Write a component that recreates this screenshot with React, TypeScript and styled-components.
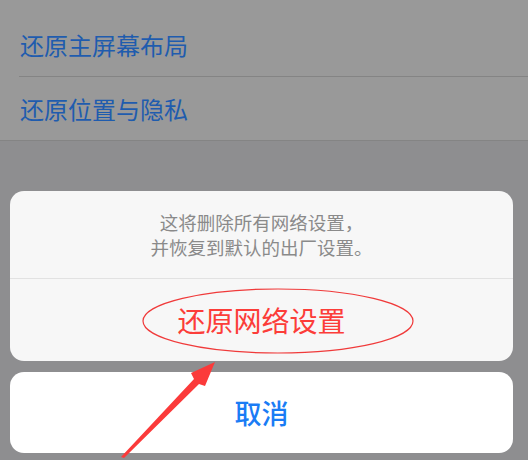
import React from "react";
import styled, { createGlobalStyle } from "styled-components";

const Global = createGlobalStyle`
  html, body { margin: 0; padding: 0; }
  body {
    width: 528px;
    height: 460px;
    overflow: hidden;
    background: #8e8e90;
    font-family: "Noto Sans CJK SC", "Noto Sans", sans-serif;
  }
`;

const Screen = styled.div`
  position: relative;
  width: 528px;
  height: 460px;
  background: #8e8e90;
  display: flex;
  flex-direction: column;
`;

const List = styled.div`
  background: #999999;
  border-bottom: 1px solid #848484;
  display: flex;
  flex-direction: column;
`;

const Row = styled.div<{ $h: number }>`
  position: relative;
  height: ${(p) => p.$h}px;
  padding-left: 20px;
  display: flex;
  align-items: center;
  font-size: 24px;
  color: #1f5cae;
  & + &::before {
    content: "";
    position: absolute;
    top: 0;
    left: 19px;
    right: 0;
    height: 1px;
    background: #848484;
  }
`;

const Sheet = styled.div`
  margin-top: 50px;
  padding: 0 15px 0 10px;
  display: flex;
  flex-direction: column;
  gap: 11px;
`;

const Group = styled.div`
  background: #f7f7f7;
  border-radius: 14px;
  display: flex;
  flex-direction: column;
  overflow: hidden;
`;

const Message = styled.div`
  height: 87px;
  display: flex;
  flex-direction: column;
  align-items: center;
  justify-content: center;
  font-size: 18.5px;
  line-height: 25px;
  color: #8a8a8a;
  border-bottom: 1px solid #e2e2e2;
`;

const Action = styled.div<{ $color: string; $size: number; $weight: number }>`
  height: 82px;
  display: flex;
  align-items: center;
  justify-content: center;
  font-size: ${(p) => p.$size}px;
  font-weight: ${(p) => p.$weight};
  color: ${(p) => p.$color};
`;

const CancelGroup = styled(Group)`
  background: #ffffff;
  height: 81px;
`;

const Overlay = styled.svg`
  position: absolute;
  left: 0;
  top: 0;
  pointer-events: none;
`;

export default function App() {
  return (
    <>
      <Global />
      <Screen>
        <List>
          <Row $h={12} />
          <Row $h={64}>还原主屏幕布局</Row>
          <Row $h={64}>还原位置与隐私</Row>
        </List>
        <Sheet>
          <Group>
            <Message>
              <div>这将删除所有网络设置，</div>
              <div>并恢复到默认的出厂设置。</div>
            </Message>
            <Action $color="#fc3d39" $size={28} $weight={400}>
              还原网络设置
            </Action>
          </Group>
          <CancelGroup>
            <Action $color="#1a7cf5" $size={27} $weight={500}>
              取消
            </Action>
          </CancelGroup>
        </Sheet>
        <Overlay width="528" height="460" viewBox="0 0 528 460">
          <ellipse cx="278" cy="321" rx="135" ry="32" fill="none" stroke="#f03a3a" strokeWidth="1.2" />
          <polygon
            points="121,457 194,379 191,373 215,362 205,386 199,384 124,458"
            fill="#fb3a3a"
          />
        </Overlay>
      </Screen>
    </>
  );
}
